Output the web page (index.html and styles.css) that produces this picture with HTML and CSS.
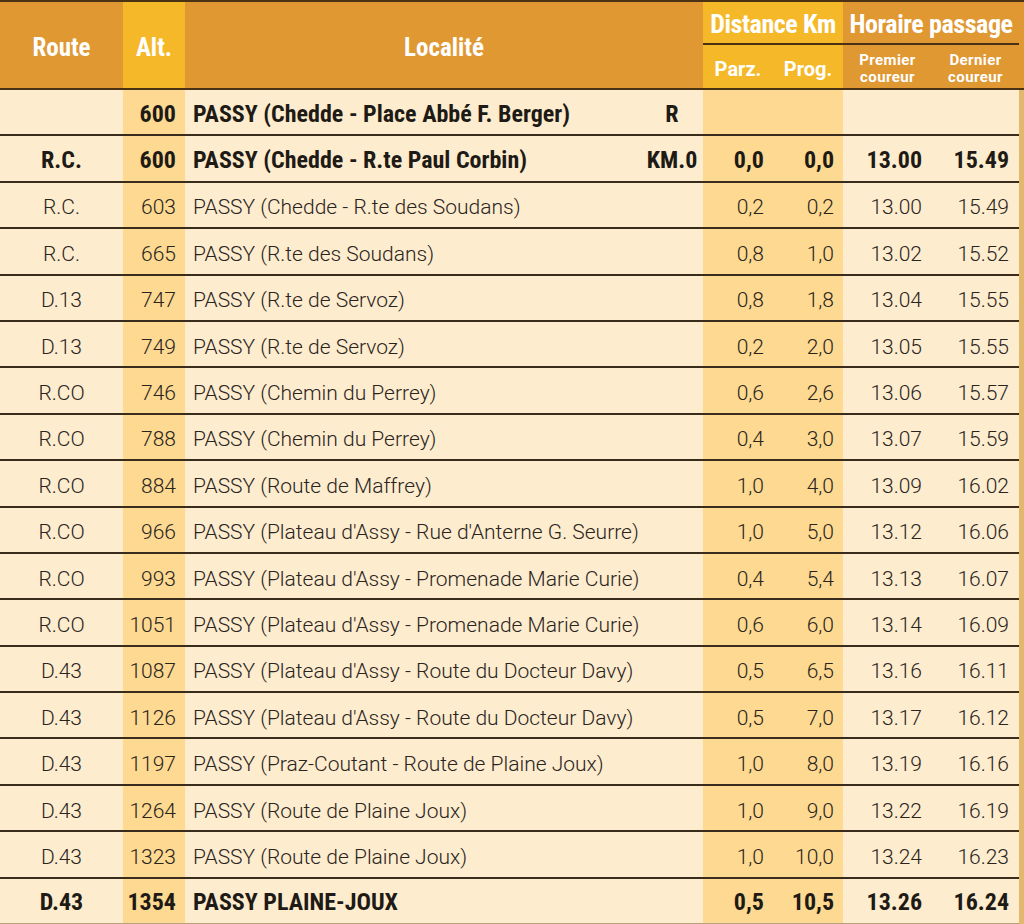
FILE: index.html
```html
<!DOCTYPE html>
<html lang="fr">
<head>
<meta charset="utf-8">
<title>Passy - Plaine-Joux</title>
<link rel="stylesheet" href="styles.css">
</head>
<body>
<table class="route-table">
  <colgroup>
    <col class="c-route"><col class="c-alt"><col class="c-loc"><col class="c-parz"><col class="c-prog"><col class="c-prem"><col class="c-dern"><col class="c-edge">
  </colgroup>
  <thead>
    <tr class="h1">
      <th rowspan="2" class="hd-orange big">Route</th>
      <th rowspan="2" class="hd-yellow big">Alt.</th>
      <th rowspan="2" class="hd-orange big">Localité</th>
      <th colspan="2" class="hd-yellow hd-group">Distance Km</th>
      <th colspan="2" class="hd-orange hd-group">Horaire passage</th>
      <th rowspan="2" class="hd-orange edge-h"></th>
    </tr>
    <tr class="h2">
      <th class="hd-yellow sub">Parz.</th>
      <th class="hd-yellow sub">Prog.</th>
      <th class="hd-orange small">Premier<br>coureur</th>
      <th class="hd-orange small">Dernier<br>coureur</th>
    </tr>
  </thead>
  <tbody>
    <tr class="bold">
      <td class="route"></td><td class="alt">600</td><td class="loc"><span class="name">PASSY (Chedde - Place Abbé F. Berger)</span><span class="tag">R</span></td><td class="dist"></td><td class="dist"></td><td class="time"></td><td class="time"></td><td class="edge"></td>
    </tr>
    <tr class="bold">
      <td class="route">R.C.</td><td class="alt">600</td><td class="loc"><span class="name">PASSY (Chedde - R.te Paul Corbin)</span><span class="tag">KM.0</span></td><td class="dist">0,0</td><td class="dist">0,0</td><td class="time">13.00</td><td class="time">15.49</td><td class="edge"></td>
    </tr>
    <tr><td class="route">R.C.</td><td class="alt">603</td><td class="loc">PASSY (Chedde - R.te des Soudans)</td><td class="dist">0,2</td><td class="dist">0,2</td><td class="time">13.00</td><td class="time">15.49</td><td class="edge"></td></tr>
    <tr><td class="route">R.C.</td><td class="alt">665</td><td class="loc">PASSY (R.te des Soudans)</td><td class="dist">0,8</td><td class="dist">1,0</td><td class="time">13.02</td><td class="time">15.52</td><td class="edge"></td></tr>
    <tr><td class="route">D.13</td><td class="alt">747</td><td class="loc">PASSY (R.te de Servoz)</td><td class="dist">0,8</td><td class="dist">1,8</td><td class="time">13.04</td><td class="time">15.55</td><td class="edge"></td></tr>
    <tr><td class="route">D.13</td><td class="alt">749</td><td class="loc">PASSY (R.te de Servoz)</td><td class="dist">0,2</td><td class="dist">2,0</td><td class="time">13.05</td><td class="time">15.55</td><td class="edge"></td></tr>
    <tr><td class="route">R.CO</td><td class="alt">746</td><td class="loc">PASSY (Chemin du Perrey)</td><td class="dist">0,6</td><td class="dist">2,6</td><td class="time">13.06</td><td class="time">15.57</td><td class="edge"></td></tr>
    <tr><td class="route">R.CO</td><td class="alt">788</td><td class="loc">PASSY (Chemin du Perrey)</td><td class="dist">0,4</td><td class="dist">3,0</td><td class="time">13.07</td><td class="time">15.59</td><td class="edge"></td></tr>
    <tr><td class="route">R.CO</td><td class="alt">884</td><td class="loc">PASSY (Route de Maffrey)</td><td class="dist">1,0</td><td class="dist">4,0</td><td class="time">13.09</td><td class="time">16.02</td><td class="edge"></td></tr>
    <tr><td class="route">R.CO</td><td class="alt">966</td><td class="loc">PASSY (Plateau d'Assy - Rue d'Anterne G. Seurre)</td><td class="dist">1,0</td><td class="dist">5,0</td><td class="time">13.12</td><td class="time">16.06</td><td class="edge"></td></tr>
    <tr><td class="route">R.CO</td><td class="alt">993</td><td class="loc">PASSY (Plateau d'Assy - Promenade Marie Curie)</td><td class="dist">0,4</td><td class="dist">5,4</td><td class="time">13.13</td><td class="time">16.07</td><td class="edge"></td></tr>
    <tr><td class="route">R.CO</td><td class="alt">1051</td><td class="loc">PASSY (Plateau d'Assy - Promenade Marie Curie)</td><td class="dist">0,6</td><td class="dist">6,0</td><td class="time">13.14</td><td class="time">16.09</td><td class="edge"></td></tr>
    <tr><td class="route">D.43</td><td class="alt">1087</td><td class="loc">PASSY (Plateau d'Assy - Route du Docteur Davy)</td><td class="dist">0,5</td><td class="dist">6,5</td><td class="time">13.16</td><td class="time">16.11</td><td class="edge"></td></tr>
    <tr><td class="route">D.43</td><td class="alt">1126</td><td class="loc">PASSY (Plateau d'Assy - Route du Docteur Davy)</td><td class="dist">0,5</td><td class="dist">7,0</td><td class="time">13.17</td><td class="time">16.12</td><td class="edge"></td></tr>
    <tr><td class="route">D.43</td><td class="alt">1197</td><td class="loc">PASSY (Praz-Coutant - Route de Plaine Joux)</td><td class="dist">1,0</td><td class="dist">8,0</td><td class="time">13.19</td><td class="time">16.16</td><td class="edge"></td></tr>
    <tr><td class="route">D.43</td><td class="alt">1264</td><td class="loc">PASSY (Route de Plaine Joux)</td><td class="dist">1,0</td><td class="dist">9,0</td><td class="time">13.22</td><td class="time">16.19</td><td class="edge"></td></tr>
    <tr><td class="route">D.43</td><td class="alt">1323</td><td class="loc">PASSY (Route de Plaine Joux)</td><td class="dist">1,0</td><td class="dist">10,0</td><td class="time">13.24</td><td class="time">16.23</td><td class="edge"></td></tr>
    <tr class="bold"><td class="route">D.43</td><td class="alt">1354</td><td class="loc">PASSY PLAINE-JOUX</td><td class="dist">0,5</td><td class="dist">10,5</td><td class="time">13.26</td><td class="time">16.24</td><td class="edge"></td></tr>
  </tbody>
</table>
</body>
</html>
```

FILE: styles.css
```css
html, body {
  margin: 0;
  padding: 0;
  background: #fdeccd;
}

body {
  font-family: Roboto, "Liberation Sans", sans-serif;
  color: #2a241d;
}

.route-table {
  width: 1024px;
  table-layout: fixed;
  border-collapse: collapse;
  border-spacing: 0;
  border-top: 2px solid #4a3214;
}

.c-route { width: 123px; }
.c-alt { width: 62px; }
.c-loc { width: 518px; }
.c-parz { width: 70px; }
.c-prog { width: 70px; }
.c-prem { width: 89px; }
.c-dern { width: 87px; }
.c-edge { width: 5px; }

th {
  color: #ffffff;
  font-weight: 700;
  padding: 0;
  text-align: center;
  line-height: 1;
}

.hd-orange { background: #e09833; }
.hd-yellow { background: #f5b829; }

.big {
  font-family: "Roboto Condensed", Roboto, sans-serif;
  font-size: 25px;
  padding-top: 5px;
}

.hd-group {
  height: 38px;
  font-family: "Roboto Condensed", Roboto, sans-serif;
  font-size: 26px;
  letter-spacing: -0.4px;
  border-bottom: 2px solid #4a3214;
  vertical-align: middle;
  padding-top: 3px;
}

.sub {
  height: 39px;
  font-size: 20px;
  padding-top: 4px;
}

.small {
  height: 38px;
  font-size: 15px;
  line-height: 17px;
  letter-spacing: 0.4px;
  padding-top: 5px;
}

thead tr.h2 th, thead th[rowspan] {
  border-bottom: 2px solid #4a3214;
}

.edge-h { background: #e09833; }

td {
  height: 38.4px;
  padding: 6px 0 0;
  border-bottom: 2px solid #3a2c1c;
  font-size: 21px;
  font-weight: 300;
  line-height: 1;
  white-space: nowrap;
}

td.edge {
  background: #e2b86c;
  border-bottom: none;
}

tbody tr:last-child td { border-bottom-color: #b9a17c; }

.route { text-align: center; }
.alt { text-align: right; padding-right: 9px; background: #fdd991; }
.loc { padding-left: 8px; padding-right: 1px; }
.dist { text-align: right; padding-right: 9px; background: #fdd991; }
.time { text-align: right; padding-right: 10px; }

.bold td {
  font-family: "Roboto Condensed", Roboto, sans-serif;
  font-weight: 700;
  font-size: 24px;
  color: #1e1a15;
  height: 41.4px;
  padding-top: 3px;
}

.loc .name { display: inline-block; }
.tag {
  float: right;
  width: 60px;
  text-align: center;
}
```
